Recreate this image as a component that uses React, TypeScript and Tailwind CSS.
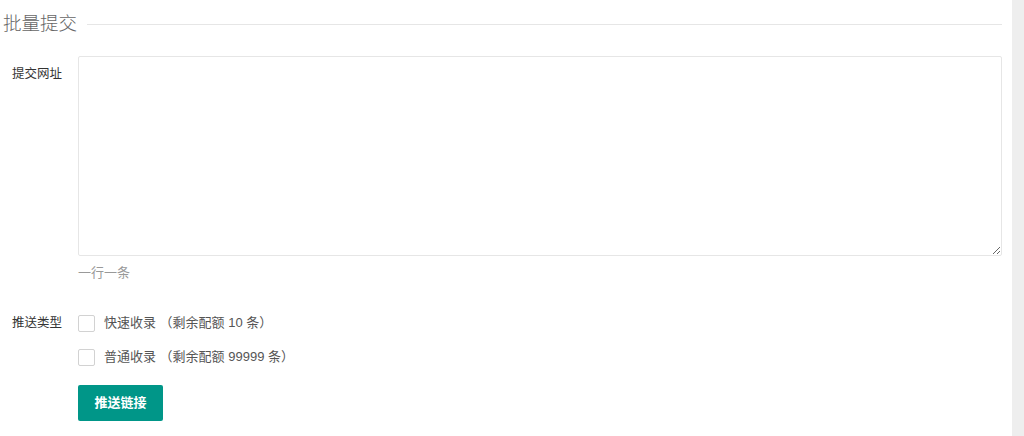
export default function App() {
  const font = { fontFamily: '"Liberation Sans", "Noto Sans CJK SC", sans-serif' };

  return (
    <div className="flex h-[436px] w-[1024px] bg-white text-[#333]" style={font}>
      <div className="flex-1 pr-[10px]">
        {/* Title with rule */}
        <div className="flex items-center pl-[3px] pt-[12px]">
          <span className="text-[18.5px] font-light leading-[24px] text-[#666]">批量提交</span>
          <div className="ml-[10px] h-px flex-1 bg-[#e6e6e6]" />
        </div>

        {/* URLs */}
        <div className="mt-[20px] flex">
          <label className="w-[78px] shrink-0 pl-[12px] pt-[9px] text-[12.5px] leading-[18px] text-[#333]">
            提交网址
          </label>
          <div className="flex-1">
            <textarea className="block h-[200px] w-full resize-y rounded-[2px] border border-[#e6e6e6] bg-white px-[10px] py-[6px] text-[13px] outline-none" />
            <div className="mt-[8px] text-[13px] leading-[18px] text-[#999]">一行一条</div>
          </div>
        </div>

        {/* Push type */}
        <div className="mt-[32px] flex">
          <label className="w-[78px] shrink-0 pl-[12px] text-[12.5px] leading-[18px] text-[#333]">
            推送类型
          </label>
          <div className="flex flex-col">
            <label className="flex items-center">
              <span className="h-[17px] w-[17px] rounded-[2px] border border-[#d2d2d2] bg-white" />
              <span className="ml-[9px] text-[13px] leading-[18px] text-[#555]">快速收录 （剩余配额 10 条）</span>
            </label>
            <label className="mt-[16px] flex items-center">
              <span className="h-[17px] w-[17px] rounded-[2px] border border-[#d2d2d2] bg-white" />
              <span className="ml-[9px] text-[13px] leading-[18px] text-[#555]">普通收录 （剩余配额 99999 条）</span>
            </label>
            <button className="mt-[19px] h-[36px] w-[85px] rounded-[2px] bg-[#009688] text-[13px] font-semibold text-white">
              推送链接
            </button>
          </div>
        </div>
      </div>
      <div className="w-[12px] bg-[#eeeeee]" />
    </div>
  );
}
